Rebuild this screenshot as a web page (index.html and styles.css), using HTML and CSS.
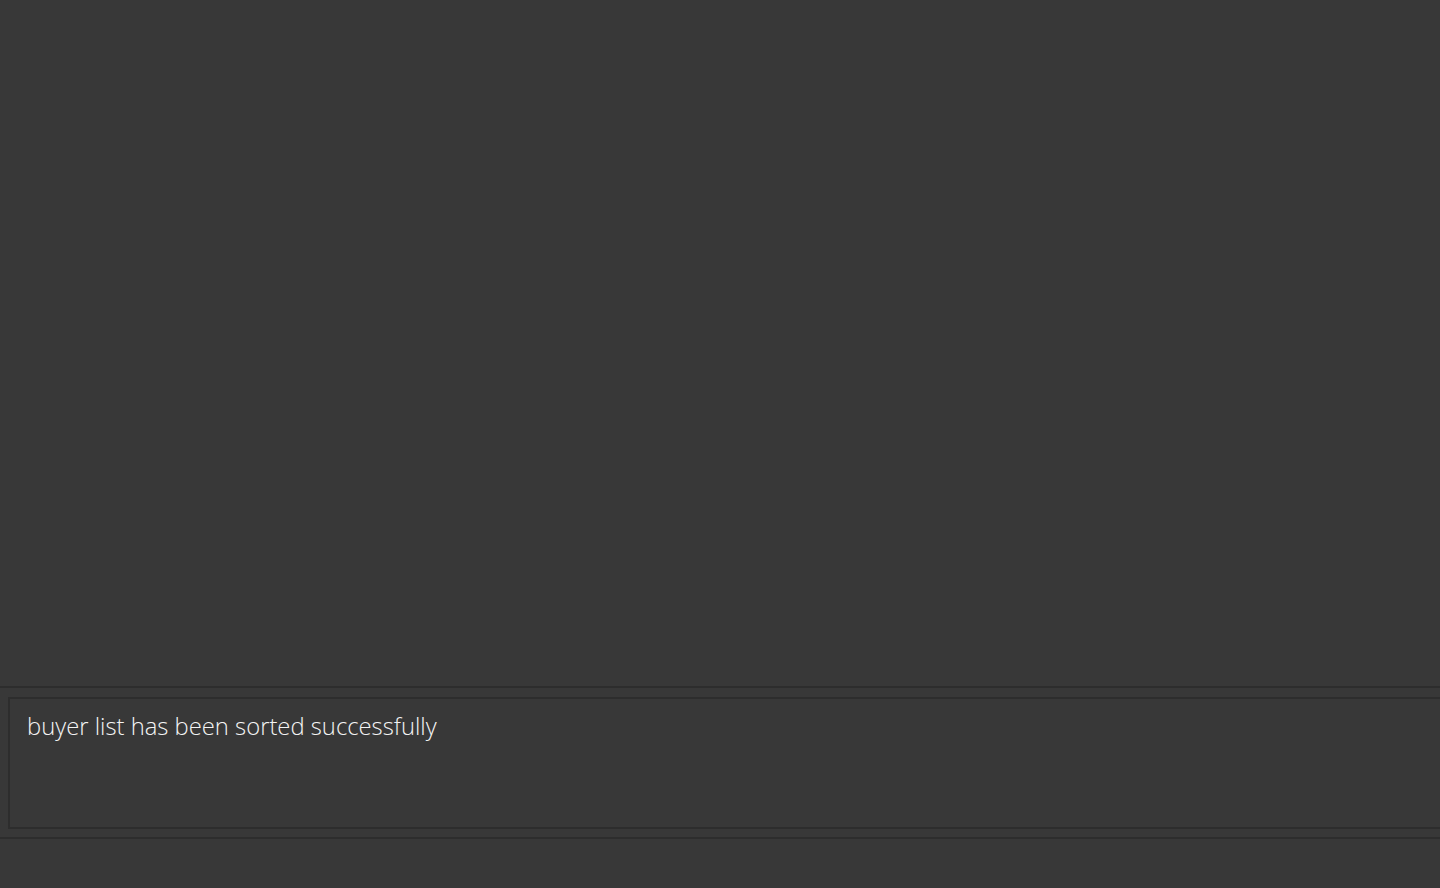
FILE: index.html
```html
<!DOCTYPE html>
<html lang="en">
<head>
<meta charset="utf-8">
<title>Result</title>
<link rel="stylesheet" href="styles.css">
</head>
<body>
<div class="app">
  <div class="list-area"></div>
  <div class="result-pane">
    <div class="result-box">
      <p class="result-text">buyer list has been sorted successfully</p>
    </div>
  </div>
  <div class="status-bar"></div>
</div>
</body>
</html>
```

FILE: styles.css
```css
html, body {
  margin: 0;
  padding: 0;
  background: #383838;
}
.app {
  display: flex;
  flex-direction: column;
  height: 888px;
  overflow: hidden;
}
.list-area {
  height: 686px;
  flex: none;
}
.result-pane {
  flex: none;
  border-top: 2px solid #2d2d2d;
  padding: 9px 0 8px 8px;
}
.result-box {
  height: 128px;
  border: 2px solid #2d2d2d;
  border-right: none;
  padding: 0 0 0 17px;
}
.result-text {
  margin: 0;
  padding-top: 11px;
  font-family: "Open Sans", "Noto Sans", sans-serif;
  font-weight: 300;
  font-size: 23.8px;
  line-height: 32px;
  color: #f4f4f4;
}
.status-bar {
  flex: 1;
  border-top: 2px solid #2d2d2d;
}
```
